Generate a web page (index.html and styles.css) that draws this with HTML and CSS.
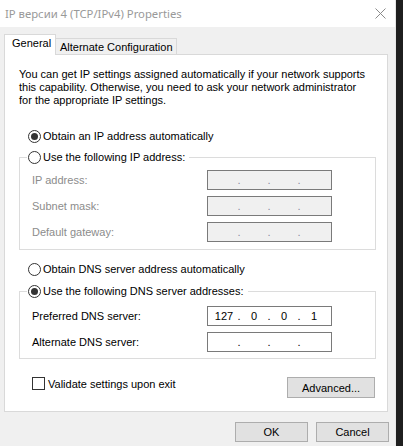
FILE: index.html
```html
<!DOCTYPE html>
<html lang="en">
<head>
<meta charset="utf-8">
<title>IP версии 4 (TCP/IPv4) Properties</title>
<link rel="stylesheet" href="styles.css">
</head>
<body>
<div class="screen">
  <div class="window">
    <div class="titlebar">
      <span class="title">IP версии 4 (TCP/IPv4) Properties</span>
      <span class="close">
        <svg width="11" height="11" viewBox="0 0 11 11"><path d="M0.5 0.5 L10.5 10.5 M10.5 0.5 L0.5 10.5" stroke="#8a8a8a" stroke-width="1" fill="none"/></svg>
      </span>
    </div>
    <div class="tabs">
      <div class="tab tab-active">General</div>
      <div class="tab tab-idle">Alternate Configuration</div>
    </div>
    <div class="panel">
      <p class="intro">You can get IP settings assigned automatically if your network supports<br>this capability. Otherwise, you need to ask your network administrator<br>for the appropriate IP settings.</p>

      <div class="opt opt-first"><span class="radio radio-on"></span><span>Obtain an IP address automatically</span></div>

      <fieldset class="group group-ip">
        <legend class="opt legend"><span class="radio"></span><span>Use the following IP address:</span></legend>
        <div class="row row-first disabled"><span class="lbl">IP address:</span><span class="ip ip-off"><span class="seg"></span><span class="dot">.</span><span class="seg"></span><span class="dot">.</span><span class="seg"></span><span class="dot">.</span><span class="seg"></span></span></div>
        <div class="row disabled"><span class="lbl">Subnet mask:</span><span class="ip ip-off"><span class="seg"></span><span class="dot">.</span><span class="seg"></span><span class="dot">.</span><span class="seg"></span><span class="dot">.</span><span class="seg"></span></span></div>
        <div class="row disabled"><span class="lbl">Default gateway:</span><span class="ip ip-off"><span class="seg"></span><span class="dot">.</span><span class="seg"></span><span class="dot">.</span><span class="seg"></span><span class="dot">.</span><span class="seg"></span></span></div>
      </fieldset>

      <div class="opt opt-dns"><span class="radio"></span><span>Obtain DNS server address automatically</span></div>

      <fieldset class="group group-dns">
        <legend class="opt legend"><span class="radio radio-on"></span><span>Use the following DNS server addresses:</span></legend>
        <div class="row row-first"><span class="lbl">Preferred DNS server:</span><span class="ip"><span class="seg">127</span><span class="dot">.</span><span class="seg">0</span><span class="dot">.</span><span class="seg">0</span><span class="dot">.</span><span class="seg">1</span></span></div>
        <div class="row"><span class="lbl">Alternate DNS server:</span><span class="ip"><span class="seg"></span><span class="dot">.</span><span class="seg"></span><span class="dot">.</span><span class="seg"></span><span class="dot">.</span><span class="seg"></span></span></div>
      </fieldset>

      <div class="footer">
        <div class="check-row"><span class="checkbox"></span><span>Validate settings upon exit</span></div>
        <button class="btn btn-adv" type="button">Advanced...</button>
      </div>
    </div>
    <div class="actions">
      <button class="btn btn-dlg" type="button">OK</button>
      <button class="btn btn-dlg" type="button">Cancel</button>
    </div>
  </div>
  <div class="backdrop"></div>
</div>
</body>
</html>
```
FILE: styles.css
```css
* { box-sizing: border-box; }

html, body {
  margin: 0;
  padding: 0;
  background: #1e1e1e;
}

.screen {
  display: flex;
  width: 403px;
  height: 446px;
  overflow: hidden;
  font-family: "Liberation Sans", Arial, sans-serif;
  font-size: 11px;
  color: #000;
}

.window {
  width: 396px;
  height: 446px;
  background: #f0f0f0;
  border-right: 1px solid #e6e6e6;
  display: flex;
  flex-direction: column;
}

.backdrop {
  flex: 1;
  background: #1f1f1f;
}

.titlebar {
  height: 27px;
  background: #fff;
  display: flex;
  align-items: center;
  justify-content: space-between;
  padding: 0 9px 1px 5px;
}

.title {
  font-family: "Noto Sans", "Open Sans", sans-serif;
  font-size: 11.3px;
  color: #999;
}

.close {
  display: flex;
  width: 11px;
  height: 11px;
}

.tabs {
  display: flex;
  align-items: flex-end;
  padding-left: 4px;
  margin-top: 7px;
  position: relative;
  z-index: 1;
  margin-bottom: -1px;
}

.tab {
  border: 1px solid #d9d9d9;
  line-height: 13px;
}

.tab-active {
  width: 52px;
  height: 21px;
  background: #fff;
  border-bottom: none;
  padding: 2px 0 0 7px;
}

.tab-idle {
  width: 121px;
  height: 17px;
  background: #f0f0f0;
  border-left: none;
  padding: 2px 0 0 4px;
}

.panel {
  margin: 0 7px 0 4px;
  height: 358px;
  background: #fff;
  border: 1px solid #d9d9d9;
  padding: 13px 11px 13px 14px;
  display: flex;
  flex-direction: column;
}

.intro {
  margin: 0;
  line-height: 13px;
  white-space: nowrap;
}

.opt {
  display: flex;
  align-items: center;
  height: 16px;
  padding-left: 9px;
  white-space: nowrap;
}

.opt-first { margin-top: 21px; }
.opt-dns { margin-top: 11px; }

.radio {
  width: 13px;
  height: 13px;
  border: 1px solid #333;
  border-radius: 50%;
  background: #fff;
  margin-right: 2px;
  display: flex;
  align-items: center;
  justify-content: center;
  flex: none;
}

.radio-on::after {
  content: "";
  width: 7px;
  height: 7px;
  border-radius: 50%;
  background: #333;
}

.group {
  margin: 0;
  min-width: 0;
  border: 1px solid #dcdcdc;
  padding: 5px 10px 7px 12px;
}

.group-ip { margin-top: 5px; }
.group-dns { margin-top: 6px; padding-top: 7px; padding-bottom: 6px; }

.legend {
  margin-left: -5px;
  padding: 0 4px 0 1px;
}

.row {
  display: flex;
  align-items: center;
  height: 20px;
  margin-top: 6px;
}

.row-first { margin-top: 0; }

.lbl {
  width: 175px;
  flex: none;
}

.disabled .lbl { color: #8c8c8c; }

.ip {
  width: 125px;
  height: 20px;
  border: 1px solid #7a7a7a;
  background: #fff;
  display: flex;
  align-items: center;
  padding-left: 4px;
}

.ip-off { background: #f0f0f0; }

.seg {
  width: 24px;
  text-align: center;
}

.dot {
  width: 6px;
  text-align: center;
}

.ip-off .dot { color: #8a8aa0; }

.footer {
  margin-top: 18px;
  display: flex;
  align-items: flex-start;
}

.check-row {
  display: flex;
  align-items: center;
  height: 13px;
  padding-left: 13px;
}

.checkbox {
  width: 13px;
  height: 13px;
  border: 1px solid #333;
  background: #fff;
  margin-right: 3px;
  flex: none;
}

.btn {
  font-family: "Liberation Sans", Arial, sans-serif;
  font-size: 11px;
  color: #000;
  background: #e1e1e1;
  border: 1px solid #adadad;
  padding: 0;
  margin: 0;
}

.btn-adv {
  width: 88px;
  height: 21px;
  margin-left: auto;
  margin-right: 1px;
}

.actions {
  display: flex;
  justify-content: flex-end;
  gap: 8px;
  margin-top: 10px;
  padding-right: 6px;
}

.btn-dlg {
  width: 73px;
  height: 20px;
}
```
